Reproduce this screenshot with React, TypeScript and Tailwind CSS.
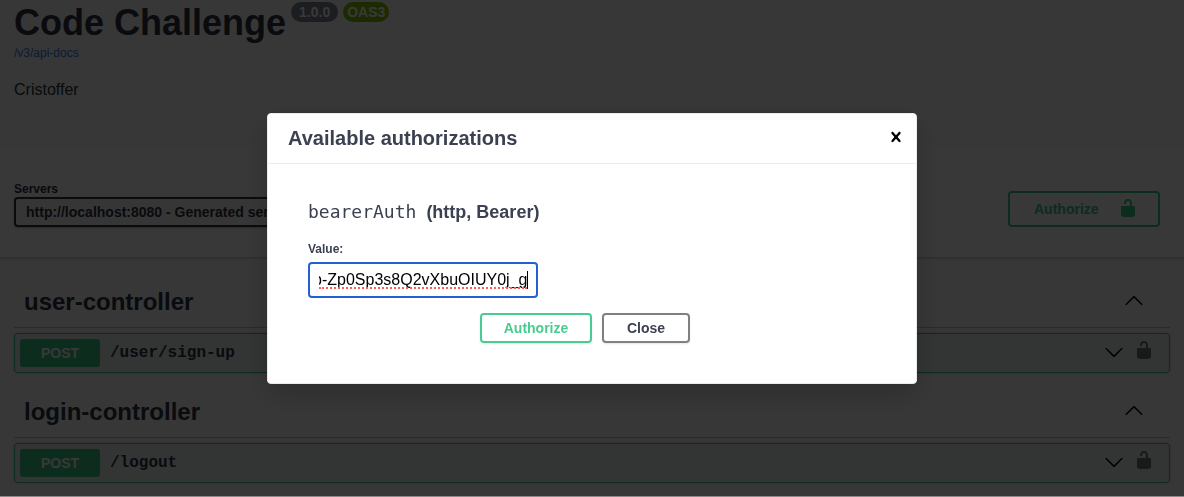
import { useEffect, useRef, useState } from "react";

const SANS = "font-['Liberation_Sans',Arial,sans-serif]";
const MONO = "font-['Liberation_Mono','Courier_New',monospace]";

function UnlockedIcon({ className = "" }: { className?: string }) {
  return (
    <svg viewBox="0 0 20 20" className={`size-5 ${className}`} fill="currentColor" aria-hidden="true">
      <path d="M15.8 8H14V5.6C14 2.703 12.665 1 10 1 7.334 1 6 2.703 6 5.6V6h2v-.801C8 3.754 8.797 3 10 3c1.203 0 2 .754 2 2.199V8H4c-.553 0-1 .646-1 1.199V17c0 .549.428 1.139.951 1.307l1.197.387C5.672 18.861 6.55 19 7.1 19h5.8c.549 0 1.428-.139 1.951-.307l1.196-.387c.524-.167.953-.757.953-1.306V9.199C17 8.646 16.352 8 15.8 8z" />
    </svg>
  );
}

function ArrowIcon({ down = false }: { down?: boolean }) {
  return (
    <svg
      viewBox="0 0 20 20"
      className={down ? "size-5 rotate-180" : "size-5"}
      fill="currentColor"
      aria-hidden="true"
    >
      <path d="M17.418 14.908c.272.268.709.268.979 0s.271-.701 0-.969l-7.908-7.83c-.27-.268-.707-.268-.979 0l-7.908 7.83c-.27.268-.27.701 0 .969.271.268.709.268.979 0L10 7.767l7.418 7.141z" />
    </svg>
  );
}

function CloseIcon() {
  return (
    <svg viewBox="0 0 20 20" className="size-5" fill="currentColor" aria-hidden="true">
      <path d="M14.348 14.849c-.469.469-1.229.469-1.697 0L10 11.819l-2.651 3.029c-.469.469-1.229.469-1.697 0-.469-.469-.469-1.229 0-1.697l2.758-3.15-2.759-3.152c-.469-.469-.469-1.228 0-1.697.469-.469 1.228-.469 1.697 0L10 8.183l2.651-3.031c.469-.469 1.228-.469 1.697 0 .469.469.469 1.229 0 1.697l-2.758 3.152 2.758 3.15c.469.469.469 1.229 0 1.698z" />
    </svg>
  );
}

function Controller({ name, path }: { name: string; path: string }) {
  return (
    <section className="pb-[13px]">
      <div className="flex h-[52px] items-center justify-between border-b border-[#3b4151]/30 pr-[26px] pl-2.5">
        <h2 className="text-2xl font-bold">{name}</h2>
        <button aria-label={`Collapse ${name}`} className="pb-1 text-black">
          <ArrowIcon />
        </button>
      </div>
      <div className="mt-[5px] flex h-10 items-center rounded border border-[#38c888] bg-[#e3f1ea] pr-[15px] pl-[5px] shadow-[0_0_3px_rgba(0,0,0,0.19)]">
        <span className="flex h-7 w-20 items-center justify-center rounded-[3px] bg-[#38c888] text-sm font-bold text-white">
          POST
        </span>
        <span className={`${MONO} flex-1 pl-2.5 text-base font-bold`}>{path}</span>
        <button aria-label={`Expand ${path}`} className="text-black">
          <ArrowIcon down />
        </button>
        <button aria-label={`Authorize ${path}`} className="ml-2.5 pb-1.5 text-[#6c726f]">
          <UnlockedIcon />
        </button>
      </div>
    </section>
  );
}

function AuthorizationDialog() {
  const [token, setToken] = useState("eyJhbGciOiJIUzI1NiJ9b-Zp0Sp3s8Q2vXbuOIUY0j_g");
  const field = useRef<HTMLInputElement>(null);

  useEffect(() => {
    const el = field.current;
    if (!el) return;
    el.focus();
    el.setSelectionRange(el.value.length, el.value.length);
    el.scrollLeft = el.scrollWidth;
  }, []);

  return (
    <div className="fixed inset-0 flex items-center justify-center border-b border-[#8a8a8a] bg-black/78 text-[#3b4151]">
      <div
        role="dialog"
        aria-labelledby="dialog-title"
        className="w-full max-w-[650px] rounded border border-[#ebebeb] bg-white shadow-[0_10px_30px_rgba(0,0,0,0.2)]"
      >
        <header className="flex h-[50px] items-center justify-between border-b border-[#ebebeb] pr-2.5 pl-5">
          <h3 id="dialog-title" className="text-xl font-bold">
            Available authorizations
          </h3>
          <button aria-label="Close dialog" className="pb-0.5 text-black">
            <CloseIcon />
          </button>
        </header>
        <form className="px-10 pt-9 pb-10" onSubmit={(e) => e.preventDefault()}>
          <h4 className="flex items-center gap-2.5 text-lg leading-6 font-bold">
            <code className="font-['DejaVu_Sans_Mono',monospace] font-normal">bearerAuth</code>
            <span>(http, Bearer)</span>
          </h4>
          <label htmlFor="token" className="mt-[17px] block text-xs font-bold">
            Value:
          </label>
          <div className="relative mt-[5px] w-[230px]">
            <input
              id="token"
              ref={field}
              type="text"
              spellCheck={false}
              value={token}
              onChange={(e) => setToken(e.target.value)}
              className="block h-9 w-full rounded border-2 border-[#2460cf] bg-white px-[9px] text-base text-black caret-transparent outline-none"
            />
            <span className="pointer-events-none absolute inset-x-[11px] bottom-[9px] border-b-2 border-dotted border-[#ff5c56]" />
            <span className="pointer-events-none absolute top-[9px] right-2.5 h-[18px] w-px bg-black" />
          </div>
          <div className="mt-[15px] flex justify-center gap-2.5 pr-3.5">
            <button className="h-[30px] w-28 rounded border-2 border-[#49cc90] text-sm font-bold text-[#49cc90] shadow-[0_1px_2px_rgba(0,0,0,0.1)]">
              Authorize
            </button>
            <button
              type="button"
              className="h-[30px] w-[88px] rounded border-2 border-[#808080] text-sm font-bold shadow-[0_1px_2px_rgba(0,0,0,0.1)]"
            >
              Close
            </button>
          </div>
        </form>
      </div>
    </div>
  );
}

export default function App() {
  return (
    <div className={`${SANS} h-screen overflow-hidden bg-[#fafafa] text-[#2c3240]`}>
      <header className="h-[149px] px-3.5 pt-0.5">
        <div className="flex items-start gap-[5px]">
          <h1 className="pt-px pb-0.5 text-4xl leading-[40px] font-bold">Code Challenge</h1>
          <span className="rounded-full bg-[#7d8492] px-2 text-sm leading-5 font-bold text-white">1.0.0</span>
          <span className="rounded-full bg-[#7fbf00] px-1 text-sm leading-5 font-bold text-white">OAS3</span>
        </div>
        <a href="/v3/api-docs" className="block text-xs text-[#2f80ee]">
          /v3/api-docs
        </a>
        <p className="mt-[17px] text-base">Cristoffer</p>
      </header>

      <div className="flex h-[109px] items-start justify-between border-b border-black/15 bg-[#fcfcfc] pt-8 pr-6 pl-3.5 shadow-[0_1px_2px_rgba(0,0,0,0.15)]">
        <div>
          <label htmlFor="server" className="block text-xs font-bold">
            Servers
          </label>
          <select
            id="server"
            className="h-[30px] appearance-none rounded border-2 border-[#30333c] bg-[#f7f7f7] pr-10 pl-2.5 text-sm font-bold shadow-[0_1px_2px_rgba(0,0,0,0.25)]"
          >
            <option>http://localhost:8080 - Generated server url</option>
          </select>
        </div>
        <button className="mt-2.5 flex h-9 w-[152px] items-center justify-between rounded border-2 border-[#38c888] pr-5 pl-6 text-sm font-bold text-[#38c888]">
          Authorize
          <UnlockedIcon className="mb-0.5" />
        </button>
      </div>

      <main className="px-3.5 pt-[18px]">
        <Controller name="user-controller" path="/user/sign-up" />
        <Controller name="login-controller" path="/logout" />
      </main>

      <AuthorizationDialog />
    </div>
  );
}
